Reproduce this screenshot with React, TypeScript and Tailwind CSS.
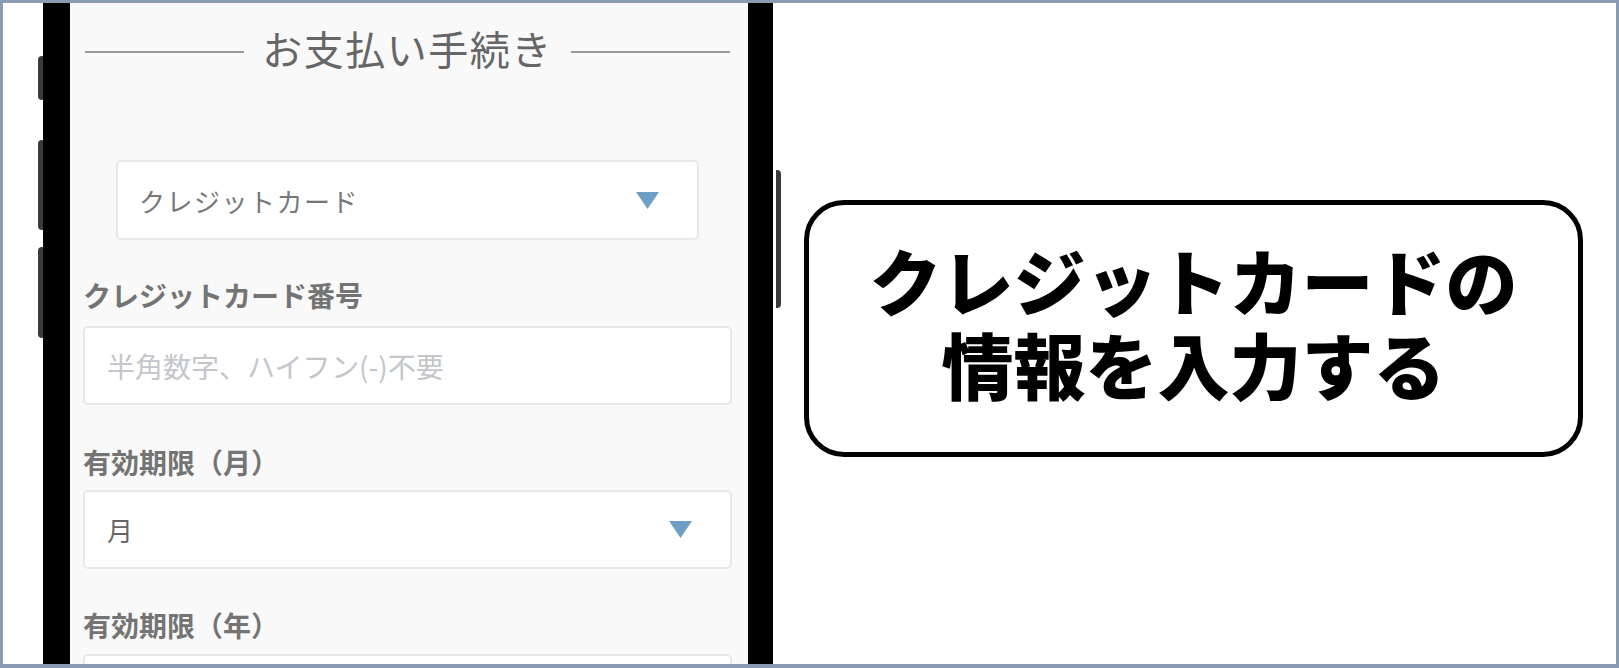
import React from 'react'

const jp = { fontFamily: '"Noto Sans CJK JP", "Noto Sans", sans-serif' }

const Caret = () => (
  <svg width="23" height="17" viewBox="0 0 23 17">
    <polygon points="0,0 23,0 11.5,17" fill="#6f9fc6" />
  </svg>
)

const Label = ({ text, className }: { text: string; className: string }) => (
  <div className={`text-[28px] leading-[36px] font-bold text-[#747474] ${className}`}>{text}</div>
)

const SideButton = ({ className }: { className: string }) => (
  <div className={`w-[5px] bg-[#3a3a3a] ${className}`}></div>
)

const App = () => {
  return (
    <div
      style={jp}
      className="w-[1619px] h-[668px] flex overflow-hidden bg-white border-[#8a9cb3] border-t-[3px] border-l-[3px] border-r-[3px] border-b-[4px]"
    >
      {/* left phone buttons */}
      <div className="ml-[35px] flex flex-col">
        <SideButton className="mt-[53px] h-[44px] rounded-l-sm" />
        <SideButton className="mt-[40px] h-[90px] rounded-l-sm" />
        <SideButton className="mt-[17px] h-[91px] rounded-l-sm" />
      </div>

      {/* phone body */}
      <div className="w-[730px] h-full border-l-[27px] border-r-[25px] border-black bg-[#f9f9f9] pl-[13px] pr-[16px] overflow-hidden">
        <div className="h-[90px] mx-[2px] flex items-center gap-[18px]">
          <div className="flex-1 h-[2px] mt-[8px] bg-[#9a9a9a]"></div>
          <div className="text-[40px] leading-[48px] tracking-[1.5px] text-[#666]">お支払い手続き</div>
          <div className="flex-1 h-[2px] mt-[8px] bg-[#9a9a9a]"></div>
        </div>

        <div className="mt-[67px] mx-[33px] h-[80px] flex items-center justify-between pl-[21px] pr-[38px] bg-white border-2 border-[#e8e8e8] rounded-[5px]">
          <span className="text-[26px] tracking-[1.5px] text-[#777]">クレジットカード</span>
          <Caret />
        </div>

        <Label text="クレジットカード番号" className="mt-[37px] mb-[13px]" />
        <div className="h-[79px] flex items-center pl-[22px] bg-white border-2 border-[#e8e8e8] rounded-[5px]">
          <span className="text-[28px] text-[#c3c6cb]">半角数字、ハイフン(-)不要</span>
        </div>

        <Label text="有効期限（月）" className="mt-[39px] mb-[10px]" />
        <div className="h-[79px] flex items-center justify-between pl-[22px] pr-[38px] bg-white border-2 border-[#e8e8e8] rounded-[5px]">
          <span className="text-[26px] text-[#666]">月</span>
          <Caret />
        </div>

        <Label text="有効期限（年）" className="mt-[38px] mb-[11px]" />
        <div className="h-[79px] bg-white border-2 border-[#e8e8e8] rounded-[5px]"></div>
      </div>

      {/* right phone button */}
      <div className="ml-[3px]">
        <SideButton className="mt-[167px] h-[138px] rounded-r-sm" />
      </div>

      {/* callout */}
      <div className="ml-[23px] mt-[197px] w-[779px] h-[257px] border-[5px] border-black rounded-[40px] flex items-center justify-center pb-[16px]">
        <p className="text-[72px] leading-[84px] font-black text-black text-center">
          クレジットカードの
          <br />
          情報を入力する
        </p>
      </div>
    </div>
  )
}

export default App
